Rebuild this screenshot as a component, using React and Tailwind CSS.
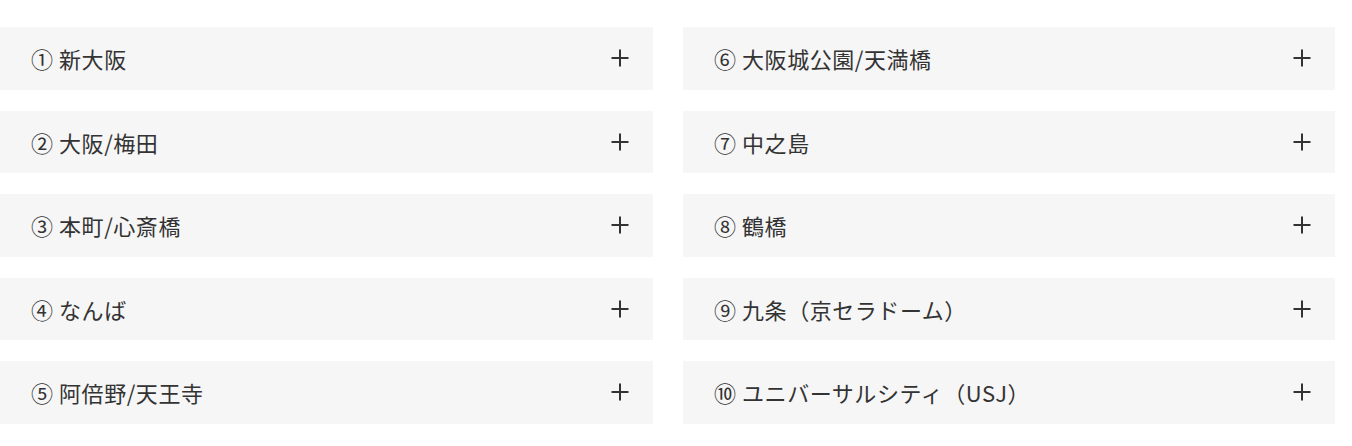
import React from "react";

const left = ["① 新大阪", "② 大阪/梅田", "③ 本町/心斎橋", "④ なんば", "⑤ 阿倍野/天王寺"];
const right = ["⑥ 大阪城公園/天満橋", "⑦ 中之島", "⑧ 鶴橋", "⑨ 九条（京セラドーム）", "⑩ ユニバーサルシティ（USJ）"];

function Plus() {
  return (
    <svg width="18" height="18" viewBox="0 0 18 18" className="shrink-0">
      <path d="M9 0.5V17.5M0.5 9H17.5" stroke="#333" strokeWidth="2" fill="none" />
    </svg>
  );
}

function Row({ label }) {
  return (
    <div className="flex h-[62.5px] items-center justify-between bg-[#f6f6f6] pl-[31px] pr-[24px]">
      <span className="text-[22px] text-[#333] leading-none tracking-[0.55px]">{label}</span>
      <Plus />
    </div>
  );
}

export default function App() {
  return (
    <div
      className="w-[1352px] h-[446px] bg-white pt-[27px]"
      style={{ fontFamily: '"Noto Sans CJK JP", "Noto Sans", sans-serif' }}
    >
      <div className="grid w-[1335px] grid-cols-[653px_652px] gap-x-[30px]">
        <div className="flex flex-col gap-[21px]">
          {left.map((l) => (
            <Row key={l} label={l} />
          ))}
        </div>
        <div className="flex flex-col gap-[21px]">
          {right.map((l) => (
            <Row key={l} label={l} />
          ))}
        </div>
      </div>
    </div>
  );
}
